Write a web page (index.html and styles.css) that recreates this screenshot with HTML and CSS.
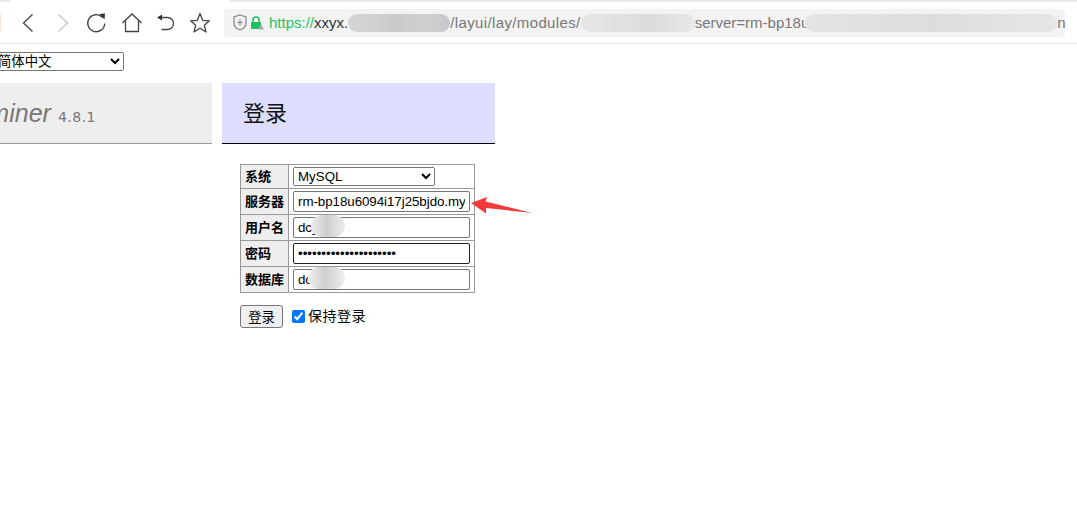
FILE: index.html
```html
<!DOCTYPE html>
<html lang="zh">
<head>
<meta charset="utf-8">
<title>登录 - Adminer</title>
<link rel="stylesheet" href="styles.css">
</head>
<body>
<header class="toolbar">
  <div class="tab-strip"><span class="tab-a"></span><span class="tab-b"></span></div>
  <div class="toolbar-row">
    <span class="fav"></span>
    <svg class="ico ico-back" width="18" height="22" viewBox="0 0 18 22"><path d="M13.5 2.500 L4.500 11 L13.500 19.500" fill="none" stroke="#444" stroke-width="1.300"/></svg>
    <svg class="ico ico-fwd" width="18" height="22" viewBox="0 0 18 22"><path d="M4.500 2.500 L13.500 11 L4.500 19.500" fill="none" stroke="#c4c4c4" stroke-width="1.300"/></svg>
    <svg class="ico ico-reload" width="22" height="22" viewBox="0 0 22 22"><path d="M17.500 5.500 A8.500 8.500 0 1 0 19.700 11.500" fill="none" stroke="#444" stroke-width="1.300"/><path d="M14.500 2 L20 1.500 L19.500 7.500 Z" fill="#333"/></svg>
    <svg class="ico ico-home" width="22" height="22" viewBox="0 0 22 22"><path d="M1.500 11 L11 2 L20.500 11 M4.500 8.500 V19.500 H17.500 V8.500" fill="none" stroke="#444" stroke-width="1.300"/></svg>
    <svg class="ico ico-undo" width="20" height="22" viewBox="0 0 20 22"><path d="M4 5.500 H11.500 A6 6 0 0 1 11.500 17.500 H5.500" fill="none" stroke="#444" stroke-width="1.300"/><path d="M6 2.500 V8.500 L1 5.500 Z" fill="#333"/></svg>
    <svg class="ico ico-star" width="22" height="22" viewBox="0 0 22 22"><path d="M11 1.500 L13.700 8.300 L20.500 8.800 L15.300 13.200 L17 20 L11 16.300 L5 20 L6.700 13.200 L1.500 8.800 L8.300 8.300 Z" fill="none" stroke="#444" stroke-width="1.300" stroke-linejoin="round"/></svg>
    <div class="address">
      <svg class="shield" width="14" height="17" viewBox="0 0 14 17"><path d="M7 1 L13 3 V9 C13 12.500 10 15 7 16 C4 15 1 12.500 1 9 V3 Z" fill="none" stroke="#888" stroke-width="1.200"/><path d="M7 5.500 V11.500 M4 8.500 H10" stroke="#888" stroke-width="1.200"/></svg>
      <svg class="lock" width="14" height="14" viewBox="0 0 14 14"><path d="M3 6 V4 A3 3 0 0 1 9 4 V6" fill="none" stroke="#1fc25f" stroke-width="1.600"/><rect x="1" y="6" width="10" height="7" rx="1" fill="#1fc25f"/><path d="M11 8 L14 13.500 H8 Z" fill="#aaa"/></svg>
      <span class="url"><span class="scheme">https://</span><span class="host">xxyx.</span><span class="mask mask-host"></span><span class="path">/layui/lay/modules/</span><span class="mask mask-path"></span><span>server=rm-bp18u</span><span class="mask mask-query"></span><span>n</span></span>
    </div>
  </div>
</header>

<main class="page">
  <select class="lang"><option>简体中文</option></select>
  <div class="columns">
    <aside class="menu">
      <h1 class="brand"><em class="brand-name">Adminer</em><span class="version">4.8.1</span></h1>
    </aside>
    <section class="content">
      <h2 class="title">登录</h2>
      <form class="login">
        <table class="fields">
          <tr class="row-first"><th>系统</th><td><select class="driver"><option>MySQL</option></select></td></tr>
          <tr><th>服务器</th><td><input class="field" value="rm-bp18u6094i17j25bjdo.mysql.rds.aliyuncs.com"></td></tr>
          <tr><th>用户名</th><td><span class="wrap"><input class="field" value="dc_"><span class="smudge smudge-user"></span></span></td></tr>
          <tr><th>密码</th><td><input class="field field-focus" type="password" value="aaaaaaaaaaaaaaaaaaaaa"></td></tr>
          <tr><th>数据库</th><td><span class="wrap"><input class="field" value="dc"><span class="smudge smudge-db"></span></span></td></tr>
        </table>
        <div class="actions">
          <button class="submit" type="button">登录</button>
          <label class="keep"><input class="check" type="checkbox" checked>保持登录</label>
        </div>
      </form>
    </section>
  </div>
  <svg class="arrow" width="64" height="20" viewBox="0 0 64 20"><path d="M0 7 L16 1 L14.500 5.500 L61 17 L15 12 L15 17.500 Z" fill="#f23c3c"/></svg>
</main>
</body>
</html>
```
FILE: styles.css
```css
* { box-sizing: border-box; }
html, body { margin: 0; padding: 0; background: #fff; overflow: hidden; }
body {
  width: 1077px;
  height: 530px;
  font-family: "Liberation Sans", "Noto Sans CJK SC", sans-serif;
  font-size: 13px;
  color: #000;
}

/* browser chrome */
.toolbar { height: 44px; border-bottom: 1px solid #e6e6e6; display: flex; flex-direction: column; }
.tab-strip { height: 2px; display: flex; justify-content: space-between; flex: none; }
.tab-a { width: 10px; background: #e8e8e8; }
.tab-b { width: 847px; background: #e8e8e8; }
.toolbar-row { display: flex; align-items: center; height: 41px; flex: none; }
.fav { width: 1px; height: 17px; background: #fde3da; flex: none; margin-right: 18px; }
.ico { flex: none; display: block; }
.ico-fwd { margin-left: 17px; }
.ico-reload { margin-left: 13px; }
.ico-home { margin-left: 14px; }
.ico-undo { margin-left: 13px; }
.ico-star { margin-left: 13px; }
.address {
  margin-left: 13px;
  width: 841px;
  height: 28px;
  background: #f3f3f3;
  border-radius: 4px;
  display: flex;
  align-items: center;
  padding-left: 9px;
  flex: none;
}
.shield { flex: none; }
.lock { flex: none; margin-left: 3px; }
.url { margin-left: 5px; display: flex; align-items: center; font-size: 15px; color: #777; white-space: nowrap; }
.scheme { color: #20c565; }
.host { color: #333; }
.path { letter-spacing: 0.370px; }
.mask { display: block; height: 18px; border-radius: 9px; flex: none; }
.mask-host { width: 102px; background: linear-gradient(90deg, #d6d6d6, #c9cbcb 45%, #cfcfcf 80%, #c4c8cc); }
.mask-path { width: 114px; background: linear-gradient(90deg, #e6e6e6, #dcdcdc 60%, #e8e8e8); }
.mask-query { width: 252px; margin-left: -4px; background: linear-gradient(90deg, #e4e4e4, #dddddd 50%, #e6e6e6); }

/* page */
.page { position: relative; padding-top: 8px; }
.lang {
  display: block;
  width: 131px;
  height: 19px;
  margin-left: -7px;
  font: 13.333px "Liberation Sans", "Noto Sans CJK SC", sans-serif;
}
.columns { display: flex; margin-top: 12px; align-items: flex-start; }
.menu { width: 212px; flex: none; overflow: hidden; }
.brand {
  margin: 0;
  height: 61px;
  background: #eee;
  border-bottom: 1px solid #999;
  color: #777;
  font-weight: normal;
  font-size: 25px;
  line-height: 60px;
  display: flex;
  justify-content: flex-end;
  align-items: baseline;
  gap: 7px;
  padding-right: 116px;
  white-space: nowrap;
}
.brand-name { font-style: italic; flex: none; }
.version { font: 14px "DejaVu Sans", sans-serif; letter-spacing: 0.500px; flex: none; }
.content { width: 273px; margin-left: 10px; flex: none; }
.title {
  margin: 0;
  height: 61px;
  background: #ddf;
  border-bottom: 1px solid #000;
  font-weight: normal;
  font-size: 22px;
  line-height: 62px;
  padding-left: 21px;
  color: #111;
}
.login { padding: 20px 0 0 18px; }
.fields { border-collapse: collapse; border: 1px solid #999; width: 235px; table-layout: fixed; }
.fields th, .fields td { border: 1px solid #999; padding: 0; height: 26px; }
.row-first th, .row-first td { height: 24px; }
.fields th { width: 48px; background: #eee; font-size: 13px; font-weight: bold; text-align: left; padding: 0 0 2px 4px; white-space: nowrap; }
.fields td { padding-left: 4px; }
.driver { display: block; width: 142px; height: 19px; font: 13.333px "Liberation Sans", sans-serif; color: #000; }
.wrap { display: block; position: relative; width: 177px; }
.field {
  display: block;
  width: 177px;
  height: 21px;
  border: 1px solid #767676;
  border-radius: 2px;
  padding: 0 4px 1px;
  font: 13.333px "Liberation Sans", sans-serif;
  letter-spacing: -0.050px;
  background: #fff;
}
.field-focus { border-color: #222; letter-spacing: 0; }
.smudge { position: absolute; top: -2px; height: 22px; border-radius: 11px; }
.smudge-user { left: 18px; width: 34px; background: linear-gradient(90deg, #ececec, #cfcfcf 45%, #dcdcdc 70%, #ececec); }
.smudge-db { left: 15px; width: 37px; background: linear-gradient(90deg, #f0f0f0, #cfcfcf 45%, #dcdcdc 70%, #eeeeee); }
.actions { display: flex; align-items: center; margin-top: 12px; }
.submit {
  width: 43px;
  height: 23px;
  padding: 0;
  border: 1px solid #767676;
  border-radius: 3px;
  background: #efefef;
  font: 13.333px "Liberation Sans", "Noto Sans CJK SC", sans-serif;
  color: #000;
}
.keep { display: flex; align-items: center; margin-left: 9px; font-size: 14px; letter-spacing: 0.500px; margin-top: -3px; }
.check { width: 13px; height: 13px; margin: 2px 3px 0 0; accent-color: #0075ff; }
.arrow { position: absolute; left: 471px; top: 152px; }
```
